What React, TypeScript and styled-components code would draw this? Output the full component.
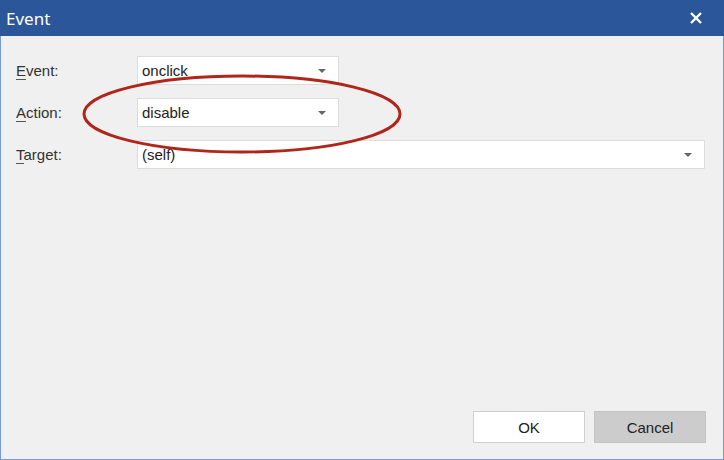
import React from 'react';
import styled, { createGlobalStyle } from 'styled-components';

const GlobalStyle = createGlobalStyle`
  html, body {
    margin: 0;
    padding: 0;
    width: 724px;
    height: 460px;
    overflow: hidden;
    font-family: 'Liberation Sans', Arial, sans-serif;
  }
`;

// Styles
const Window = styled.div`
  position: relative;
  width: 724px;
  height: 460px;
  box-sizing: border-box;
  display: flex;
  flex-direction: column;
  background: #f0f0f0;
  border: 1px solid #7a9ad6;
  border-top: none;
`;

const TitleBar = styled.div`
  height: 36px;
  margin: 0 -1px;
  background: #2b579a;
  color: #ffffff;
  display: flex;
  align-items: center;
  justify-content: space-between;
  padding: 0 0 0 6px;
  font-family: 'Noto Sans', 'Open Sans', sans-serif;
  font-size: 17px;
`;

const CloseButton = styled.div`
  width: 56px;
  height: 36px;
  display: flex;
  align-items: center;
  justify-content: center;
`;

const Body = styled.div`
  flex: 1;
  display: flex;
  flex-direction: column;
  padding: 20px 17px 16px 15px;
`;

const Form = styled.div`
  display: flex;
  flex-direction: column;
  gap: 13px;
`;

const Row = styled.div`
  display: flex;
  align-items: center;
`;

const Label = styled.div`
  width: 121px;
  font-size: 15px;
  color: #333333;

  u {
    text-decoration: none;
    border-bottom: 1px solid #555;
  }
`;

const Select = styled.div<{ $wide?: boolean }>`
  width: ${(p) => (p.$wide ? '568px' : '202px')};
  height: 29px;
  box-sizing: border-box;
  background: #ffffff;
  border: 1px solid #dcdcdc;
  display: flex;
  align-items: center;
  justify-content: space-between;
  padding: 0 12px 0 4px;
  font-size: 15px;
  color: #222222;
`;

const Caret = styled.span`
  width: 0;
  height: 0;
  border-left: 4px solid transparent;
  border-right: 4px solid transparent;
  border-top: 4px solid #666666;
`;

const Footer = styled.div`
  margin-top: auto;
  display: flex;
  justify-content: flex-end;
  gap: 9px;
`;

const Button = styled.div<{ $secondary?: boolean }>`
  width: 112px;
  height: 32px;
  box-sizing: border-box;
  display: flex;
  align-items: center;
  justify-content: center;
  font-size: 15px;
  color: #222222;
  background: ${(p) => (p.$secondary ? '#cccccc' : '#ffffff')};
  border: 1px solid ${(p) => (p.$secondary ? '#c4c4c4' : '#d0d0d0')};
`;

const Highlight = styled.svg`
  position: absolute;
  left: 80px;
  top: 72px;
  pointer-events: none;
`;

const fields = [
  { key: 'E', rest: 'vent:', value: 'onclick' },
  { key: 'A', rest: 'ction:', value: 'disable' },
  { key: 'T', rest: 'arget:', value: '(self)', wide: true },
];

const App: React.FC = () => {
  return (
    <Window>
      <GlobalStyle />
      <TitleBar>
        <span>Event</span>
        <CloseButton>
          <svg width="14" height="14" viewBox="0 0 14 14">
            <path d="M2 2 L12 12 M12 2 L2 12" stroke="#fff" strokeWidth="2.4" />
          </svg>
        </CloseButton>
      </TitleBar>

      <Body>
        <Form>
          {fields.map((f) => (
            <Row key={f.key}>
              <Label>
                <u>{f.key}</u>
                {f.rest}
              </Label>
              <Select $wide={f.wide}>
                <span>{f.value}</span>
                <Caret />
              </Select>
            </Row>
          ))}
        </Form>

        <Footer>
          <Button>OK</Button>
          <Button $secondary>Cancel</Button>
        </Footer>
      </Body>

      <Highlight width="324" height="86" viewBox="0 0 324 86">
        <ellipse
          cx="161"
          cy="42"
          rx="158"
          ry="38"
          fill="none"
          stroke="#b0261b"
          strokeWidth="3"
        />
      </Highlight>
    </Window>
  );
};

export default App;
